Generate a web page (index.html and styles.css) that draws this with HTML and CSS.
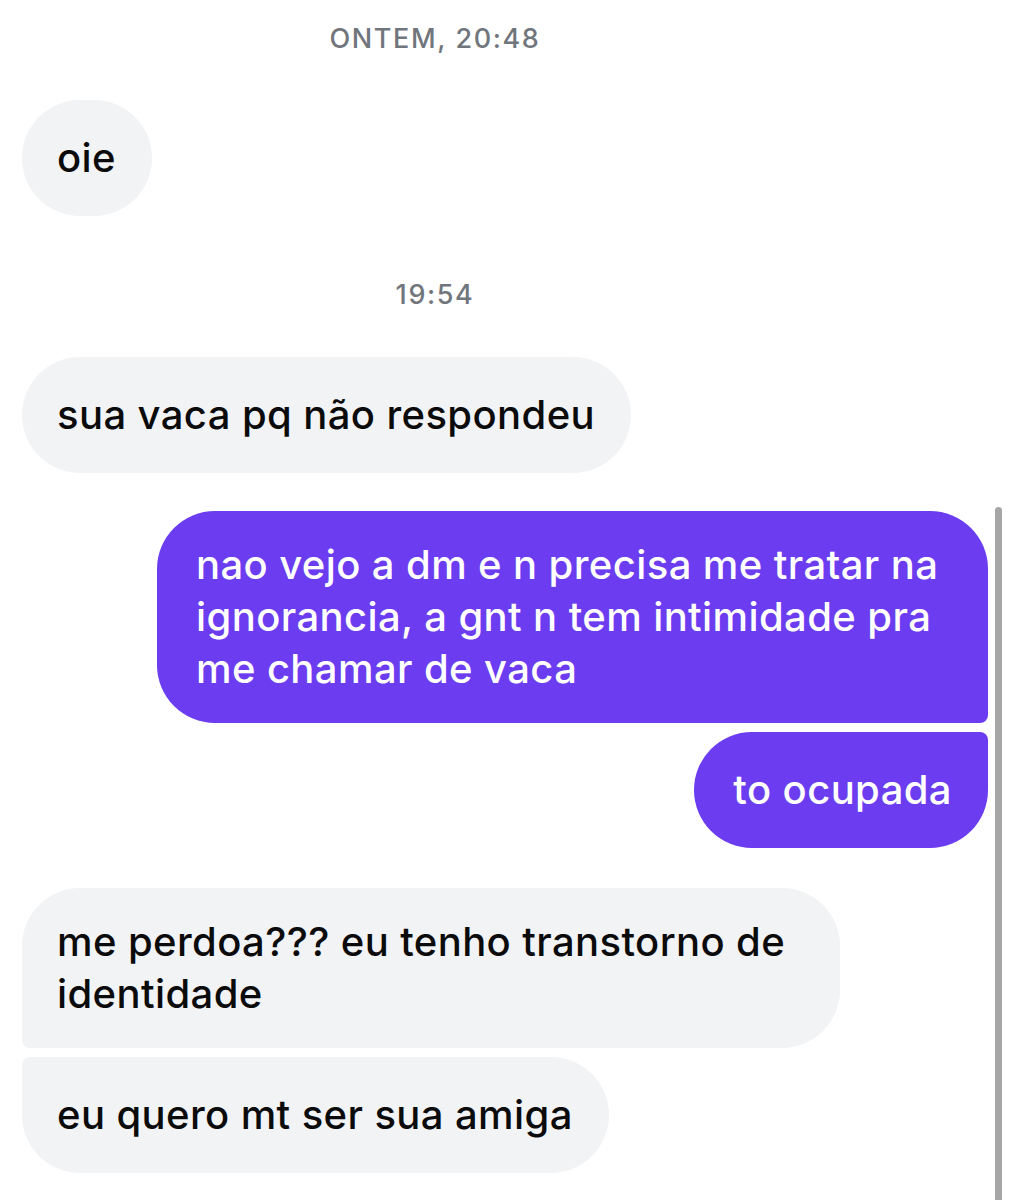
FILE: index.html
```html
<!DOCTYPE html>
<html lang="pt-BR">
<head>
  <meta charset="UTF-8">
  <meta name="viewport" content="width=device-width, initial-scale=1.0">
  <title>Conversa</title>
  <link rel="stylesheet" href="styles.css">
</head>
<body>
  <div class="chat">
    <div class="stamp stamp-first">ONTEM, 20:48</div>

    <div class="msg in">oie</div>

    <div class="stamp">19:54</div>

    <div class="msg in">sua vaca pq não respondeu</div>

    <div class="group out">
      <div class="msg out first">nao vejo a dm e n precisa me tratar na ignorancia, a gnt n tem intimidade pra me chamar de vaca</div>
      <div class="msg out last">to ocupada</div>
    </div>

    <div class="group">
      <div class="msg in first">me perdoa??? eu tenho transtorno de identidade</div>
      <div class="msg in last">eu quero mt ser sua amiga</div>
    </div>
  </div>

  <div class="scroll-bar"></div>
</body>
</html>
```

FILE: styles.css
```css
/* base */
body {
  margin: 0;
  background-color: #ffffff;
  font-family: Inter, "Noto Sans", "Liberation Sans", sans-serif;
  overflow: hidden;
}

.chat {
  display: flex;
  flex-direction: column;
  align-items: flex-start;
  padding: 0 24px 0 22px;
}

/* timestamps */
.stamp {
  align-self: stretch;
  padding-right: 140px;
  text-align: center;
  font-size: 27px;
  line-height: 36px;
  font-weight: 500;
  letter-spacing: 1.6px;
  color: #71757c;
  margin: 61px 0 44px;
}

.stamp-first {
  margin-top: 21px;
  margin-bottom: 43px;
}

/* bubbles */
.msg {
  box-sizing: border-box;
  min-height: 116px;
  display: flex;
  align-items: center;
  padding: 28px 36px 28px 35px;
  font-size: 40px;
  line-height: 52px;
  font-weight: 500;
  letter-spacing: 0.4px;
  border-radius: 58px;
}

.msg.in {
  background-color: #f2f3f5;
  color: #0b0b0c;
  max-width: 818px;
}

.msg.out {
  background-color: #6b3cf0;
  color: #ffffff;
  max-width: 831px;
  padding-left: 39px;
}

.group {
  display: flex;
  flex-direction: column;
  align-items: flex-start;
  gap: 9px;
  align-self: stretch;
  margin-bottom: 40px;
}

.group.out {
  align-items: flex-end;
  margin-top: 38px;
}

.msg.out.first {
  border-bottom-right-radius: 8px;
}

.msg.out.last {
  border-top-right-radius: 8px;
}

.msg.in.first {
  border-bottom-left-radius: 8px;
}

.msg.in.last {
  border-top-left-radius: 8px;
}

/* scroll indicator */
.scroll-bar {
  position: absolute;
  top: 507px;
  left: 995px;
  width: 7px;
  height: 720px;
  border-radius: 4px;
  background-color: #a6a6a6;
}
```
